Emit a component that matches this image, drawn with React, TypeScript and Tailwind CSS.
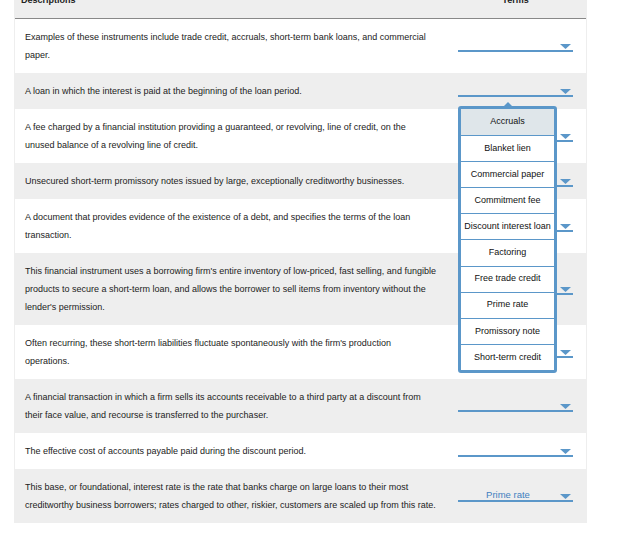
import React from 'react';

const BLUE = '#5b97c9';

const terms = [
  'Accruals',
  'Blanket lien',
  'Commercial paper',
  'Commitment fee',
  'Discount interest loan',
  'Factoring',
  'Free trade credit',
  'Prime rate',
  'Promissory note',
  'Short-term credit',
];

const rows: { text: string; value?: string; open?: boolean }[] = [
  { text: 'Examples of these instruments include trade credit, accruals, short-term bank loans, and commercial paper.' },
  { text: 'A loan in which the interest is paid at the beginning of the loan period.', open: true },
  { text: 'A fee charged by a financial institution providing a guaranteed, or revolving, line of credit, on the unused balance of a revolving line of credit.' },
  { text: 'Unsecured short-term promissory notes issued by large, exceptionally creditworthy businesses.' },
  { text: 'A document that provides evidence of the existence of a debt, and specifies the terms of the loan transaction.' },
  { text: "This financial instrument uses a borrowing firm's entire inventory of low-priced, fast selling, and fungible products to secure a short-term loan, and allows the borrower to sell items from inventory without the lender's permission." },
  { text: "Often recurring, these short-term liabilities fluctuate spontaneously with the firm's production operations." },
  { text: 'A financial transaction in which a firm sells its accounts receivable to a third party at a discount from their face value, and recourse is transferred to the purchaser.' },
  { text: 'The effective cost of accounts payable paid during the discount period.' },
  { text: 'This base, or foundational, interest rate is the rate that banks charge on large loans to their most creditworthy business borrowers; rates charged to other, riskier, customers are scaled up from this rate.', value: 'Prime rate' },
];

const Arrow = () => (
  <svg width="11" height="5" viewBox="0 0 11 5" className="absolute right-[2px] bottom-[1px]">
    <path d="M0 0 H11 L5.5 5 Z" fill={BLUE} />
  </svg>
);

const Popup = () => (
  <div className="absolute left-0 top-[21px] z-10 w-[99px]">
    <svg width="10" height="5" viewBox="0 0 10 5" className="absolute left-[45px] -top-[4px]">
      <path d="M0 5 L5 0 L10 5 Z" fill={BLUE} />
    </svg>
    <div className="rounded-[3px] border-[3px] border-[#5b97c9] bg-white">
      {terms.map((t, i) => (
        <div
          key={t}
          className={`h-[26.1px] flex items-center justify-center text-[9px] text-[#111] ${i > 0 ? 'border-t border-[#5b97c9]' : ''} ${i === 0 ? 'bg-[#dfe6ea]' : ''}`}
        >
          {t}
        </div>
      ))}
    </div>
  </div>
);

const Dropdown = ({ value, open }: { value?: string; open?: boolean }) => (
  <div className="relative w-[115px] h-[12px] border-b-2 border-[#5b97c9]">
    {value && (
      <span className="absolute left-0 right-[15px] bottom-[1px] text-center text-[9.5px] leading-none text-[#3f80c0]">
        {value}
      </span>
    )}
    <Arrow />
    {open && <Popup />}
  </div>
);

export default function App() {
  return (
    <div className="min-h-[539px] bg-white" style={{ fontFamily: '"Liberation Sans", Arial, sans-serif' }}>
      <div className="-mt-[18px] ml-[14px] w-[573px] border-x border-[#eeeeee]">
        <div className="flex bg-[#eeeeee] border-b border-[#888888] text-[9px] font-bold leading-[18px] text-[#222]">
          <div className="w-[430px] py-[9px] pl-[6px]">Descriptions</div>
          <div className="flex-1 py-[9px] text-center">Terms</div>
        </div>
        {rows.map((r, i) => (
          <div key={i} className={`flex ${i % 2 === 1 ? 'bg-[#eeeeee]' : 'bg-white'}`}>
            <div className="w-[430px] py-[9px] pl-[10px] pr-[8px] text-[9px] leading-[18px] text-[#222]">
              {r.text}
            </div>
            <div className="flex-1 flex items-center justify-center">
              <Dropdown value={r.value} open={r.open} />
            </div>
          </div>
        ))}
      </div>
    </div>
  );
}
